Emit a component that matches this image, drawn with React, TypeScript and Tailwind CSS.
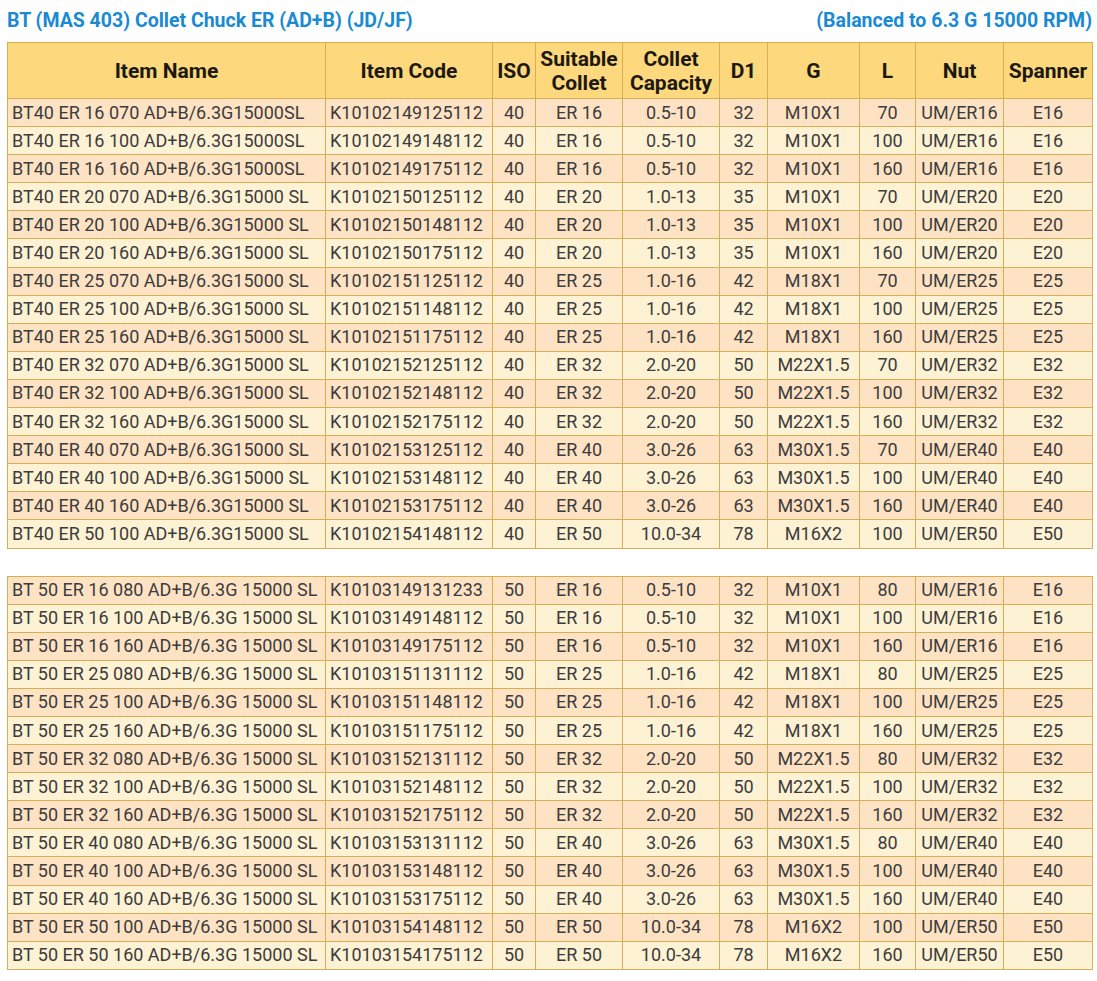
import React from "react"

type Row = [string, string, string, string, string, string, string, string, string, string]

const widths = [318, 167, 43, 87, 97, 48, 92, 56, 88, 89]

const spec: Record<string, [string, string, string, string]> = {
  "16": ["0.5-10", "32", "M10X1", "E16"],
  "20": ["1.0-13", "35", "M10X1", "E20"],
  "25": ["1.0-16", "42", "M18X1", "E25"],
  "32": ["2.0-20", "50", "M22X1.5", "E32"],
  "40": ["3.0-26", "63", "M30X1.5", "E40"],
  "50": ["10.0-34", "78", "M16X2", "E50"],
}

function bt40(er: string, len: string, code: string, compact = false): Row {
  const [cap, d1, g, sp] = spec[er]
  const name = compact
    ? `BT40 ER ${er} ${len} AD+B/6.3G15000SL`
    : `BT40 ER ${er} ${len} AD+B/6.3G15000 SL`
  return [name, code, "40", `ER ${er}`, cap, d1, g, String(Number(len)), `UM/ER${er}`, sp]
}

function bt50(er: string, len: string, code: string): Row {
  const [cap, d1, g, sp] = spec[er]
  return [
    `BT 50 ER ${er} ${len} AD+B/6.3G 15000 SL`,
    code,
    "50",
    `ER ${er}`,
    cap,
    d1,
    g,
    String(Number(len)),
    `UM/ER${er}`,
    sp,
  ]
}

const first: Row[] = [
  bt40("16", "070", "K10102149125112", true),
  bt40("16", "100", "K10102149148112", true),
  bt40("16", "160", "K10102149175112", true),
  bt40("20", "070", "K10102150125112"),
  bt40("20", "100", "K10102150148112"),
  bt40("20", "160", "K10102150175112"),
  bt40("25", "070", "K10102151125112"),
  bt40("25", "100", "K10102151148112"),
  bt40("25", "160", "K10102151175112"),
  bt40("32", "070", "K10102152125112"),
  bt40("32", "100", "K10102152148112"),
  bt40("32", "160", "K10102152175112"),
  bt40("40", "070", "K10102153125112"),
  bt40("40", "100", "K10102153148112"),
  bt40("40", "160", "K10102153175112"),
  bt40("50", "100", "K10102154148112"),
]

const second: Row[] = [
  bt50("16", "080", "K10103149131233"),
  bt50("16", "100", "K10103149148112"),
  bt50("16", "160", "K10103149175112"),
  bt50("25", "080", "K10103151131112"),
  bt50("25", "100", "K10103151148112"),
  bt50("25", "160", "K10103151175112"),
  bt50("32", "080", "K10103152131112"),
  bt50("32", "100", "K10103152148112"),
  bt50("32", "160", "K10103152175112"),
  bt50("40", "080", "K10103153131112"),
  bt50("40", "100", "K10103153148112"),
  bt50("40", "160", "K10103153175112"),
  bt50("50", "100", "K10103154148112"),
  bt50("50", "160", "K10103154175112"),
]

function Cols() {
  return (
    <colgroup>
      {widths.map((w, i) => (
        <col key={i} style={{ width: w }} />
      ))}
    </colgroup>
  )
}

function Body({ rows }: { rows: Row[] }) {
  return (
    <tbody>
      {rows.map((r, i) => (
        <tr key={i} className={`h-[28.1px] ${i % 2 === 0 ? "bg-[#fde3c4]" : "bg-[#fef2d4]"}`}>
          {r.map((c, j) => (
            <td
              key={j}
              className={`border border-[#d8ae55] p-0 leading-none whitespace-nowrap ${
                j < 2 ? "text-left pl-[4px]" : "text-center"
              }`}
            >
              {c}
            </td>
          ))}
        </tr>
      ))}
    </tbody>
  )
}

const headers = [
  "Item Name",
  "Item Code",
  "ISO",
  ["Suitable", "Collet"],
  ["Collet", "Capacity"],
  "D1",
  "G",
  "L",
  "Nut",
  "Spanner",
]

export default function App() {
  return (
    <div className="w-[1097px] min-h-[981px] bg-white pl-[7px] pr-[5px] font-['Roboto',sans-serif]">
      <div className="h-[42px] flex items-center justify-between text-[19.5px] font-bold text-[#1a8ad3]">
        <span>BT (MAS 403) Collet Chuck ER (AD+B) (JD/JF)</span>
        <span>(Balanced to 6.3 G 15000 RPM)</span>
      </div>

      <table className="table-fixed border-collapse w-[1085px] text-[18px] text-[#3c3c3c] border border-[#cfa445]">
        <Cols />
        <thead>
          <tr className="h-[56px] bg-[#fed87c]">
            {headers.map((h, i) => (
              <th
                key={i}
                className="border border-[#d8ae55] p-0 font-bold text-[21px] leading-[24px] text-[#1c1914] text-center whitespace-nowrap"
              >
                {Array.isArray(h) ? (
                  <>
                    {h[0]}
                    <br />
                    {h[1]}
                  </>
                ) : (
                  h
                )}
              </th>
            ))}
          </tr>
        </thead>
        <Body rows={first} />
      </table>

      <div className="h-[27px]" />

      <table className="table-fixed border-collapse w-[1085px] text-[18px] text-[#3c3c3c] border border-[#cfa445]">
        <Cols />
        <Body rows={second} />
      </table>
    </div>
  )
}
